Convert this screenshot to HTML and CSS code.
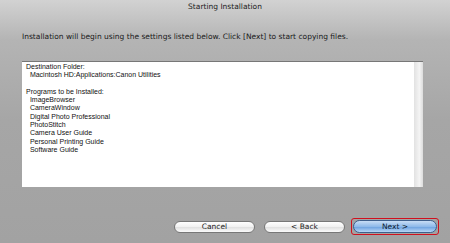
FILE: index.html
```html
<!DOCTYPE html>
<html>
<head>
    <meta charset="UTF-8">
    <title>Starting Installation</title>
    <link rel="stylesheet" href="styles.css">
</head>
<body>
    <div class="window">
        <div class="title">Starting Installation</div>
        <p class="intro">Installation will begin using the settings listed below. Click [Next] to start copying files.</p>

        <div class="list-box">
            <div class="list-text">Destination Folder:
  Macintosh HD:Applications:Canon Utilities

Programs to be Installed:
  ImageBrowser
  CameraWindow
  Digital Photo Professional
  PhotoStitch
  Camera User Guide
  Personal Printing Guide
  Software Guide</div>
            <div class="scrollbar"></div>
        </div>

        <div class="buttons">
            <button class="btn">Cancel</button>
            <button class="btn">&lt; Back</button>
            <span class="highlight"><button class="btn default">Next &gt;</button></span>
        </div>
    </div>
</body>
</html>
```

FILE: styles.css
```css
html, body {
    margin: 0;
    padding: 0;
}
body {
    font-family: "Liberation Sans", Arial, sans-serif;
    width: 450px;
    height: 243px;
    overflow: hidden;
}
.window {
    width: 450px;
    height: 243px;
    box-sizing: border-box;
    background: linear-gradient(#d2d2d2 0px, #b4b4b4 40px, #a6a6a6 120px, #a2a2a2 243px);
    display: flex;
    flex-direction: column;
}
.title {
    font-family: "DejaVu Sans", sans-serif;
    font-size: 7.5px;
    color: #222;
    text-align: center;
    height: 14px;
    line-height: 13px;
}
.intro {
    font-family: "DejaVu Sans", sans-serif;
    font-size: 7.5px;
    color: #1a1a1a;
    margin: 18px 0 0 22px;
    line-height: 10px;
}
.list-box {
    margin: 19px 0 0 22px;
    width: 401px;
    height: 126px;
    box-sizing: border-box;
    background: #fff;
    border-top: 1px solid #777;
    display: flex;
}
.list-text {
    flex: 1;
    white-space: pre;
    font-size: 7px;
    line-height: 8.3px;
    color: #111;
    padding: 1px 0 0 4px;
}
.scrollbar {
    width: 9px;
    background: linear-gradient(90deg, #e2e2e2, #f4f4f4 60%, #dcdcdc);
}
.buttons {
    display: flex;
    justify-content: flex-end;
    align-items: center;
    gap: 9px;
    margin: 31px 11px 0 0;
}
.btn {
    font-family: "DejaVu Sans", sans-serif;
    font-size: 7.5px;
    color: #222;
    width: 81px;
    height: 12px;
    padding: 0;
    border: 1px solid #777;
    border-radius: 7px;
    background: linear-gradient(#ffffff, #f0f0f0 50%, #e2e2e2 55%, #fafafa);
    line-height: 10px;
}
.btn.default {
    width: 84px;
    height: 13px;
    color: #0d1a30;
    border-color: #3d5f8c;
    background: linear-gradient(#c8ddf5, #8fbaea 50%, #6fa3e0 55%, #b7d6f6);
}
.highlight {
    display: flex;
    padding: 1px;
    border: 1px solid #d0101e;
    border-radius: 3px;
    margin-left: -3px;
}
```
